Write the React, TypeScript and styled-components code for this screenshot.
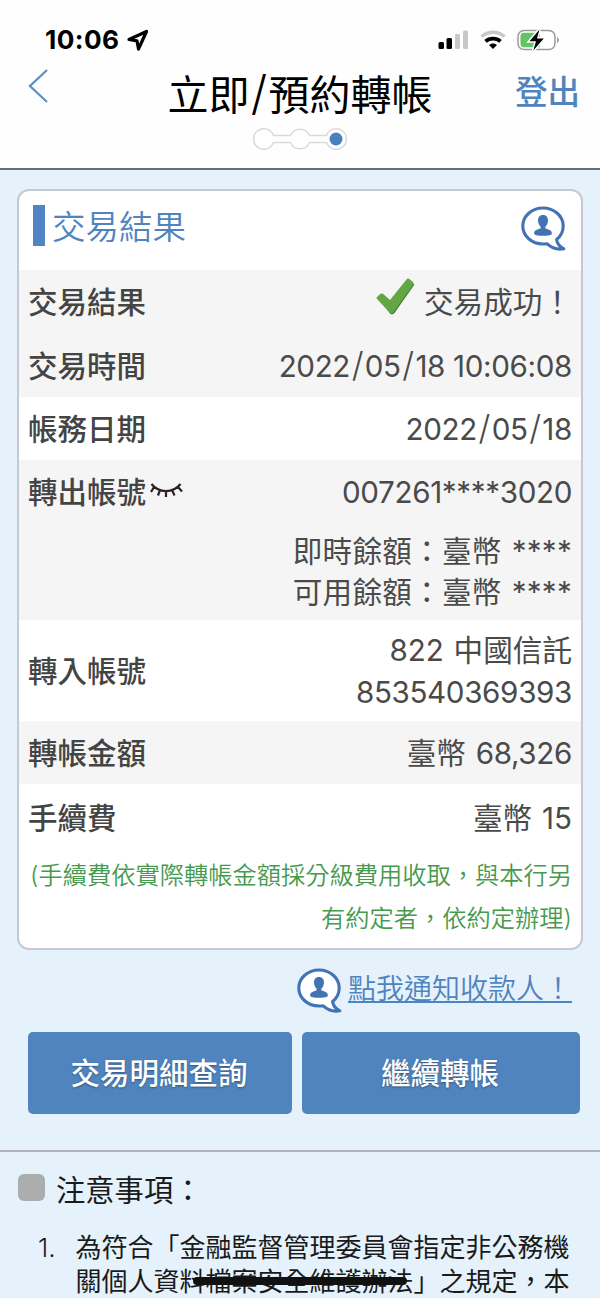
import React from 'react';
import styled, { createGlobalStyle } from 'styled-components';

const GlobalStyle = createGlobalStyle`
  * { box-sizing: border-box; }
  html, body { margin: 0; padding: 0; }
  body {
    height: 1298px;
    overflow: hidden;
    background: #e5f2fc;
    font-family: Inter, 'Noto Sans CJK TC', sans-serif;
    color: #444;
  }
`;

const Screen = styled.div`
  position: relative;
  width: 600px;
  height: 1298px;
  overflow: hidden;
  background: #e5f2fc;
`;

const Header = styled.header`
  height: 170px;
  background: #fefefe;
  border-bottom: 2px solid #666e80;
`;

const StatusBar = styled.div`
  display: flex;
  align-items: center;
  height: 66px;
  padding: 14px 41px 0 45px;
`;

const Clock = styled.span`
  width: 75px;
  font-size: 26.2px;
  line-height: 30px;
  font-weight: 700;
  letter-spacing: 0.4px;
  color: #000;
  white-space: nowrap;
`;

const StatusIcons = styled.div`
  display: flex;
  align-items: center;
  gap: 10px;
  margin-left: auto;
`;

const NavBar = styled.div`
  display: grid;
  grid-template-columns: 120px 1fr 120px;
  height: 56px;
`;

const BackButton = styled.button`
  display: flex;
  align-items: flex-start;
  padding: 2px 0 0 28px;
  border: 0;
  background: none;
`;

const Title = styled.h1`
  margin: 0;
  font-size: 41px;
  line-height: 58px;
  font-weight: 400;
  text-align: center;
  color: #000;
  white-space: nowrap;
`;

const Slash = styled.span<{ $gap: number }>`
  padding: 0 ${p => p.$gap}px;
  font-size: 1.15em;
  font-weight: 300;
  line-height: 0;
`;

const Logout = styled.a`
  padding-right: 20px;
  font-size: 32.5px;
  line-height: 53px;
  font-weight: 500;
  text-align: right;
  color: #5084bf;
`;

const Steps = styled.div`
  display: flex;
  justify-content: center;
  padding-top: 5px;
`;

const Card = styled.section`
  width: 566px;
  height: 761px;
  margin: 19px 0 0 17px;
  overflow: hidden;
  border: 2px solid #c6c9d1;
  border-radius: 12px;
  background: #fff;
`;

const CardHead = styled.div`
  display: flex;
  align-items: center;
  height: 79px;
  padding: 0 15px 4px 14px;
`;

const Accent = styled.span`
  width: 12px;
  height: 41px;
  margin: -6px 7px 0 0;
  background: #5084c4;
`;

const CardTitle = styled.h2`
  flex: 1;
  margin: -4px 0 0;
  font-size: 33.5px;
  line-height: 44px;
  font-weight: 350;
  color: #5084bf;
`;

const Row = styled.div<{ $h: number; $shade?: boolean; $top?: boolean }>`
  display: flex;
  justify-content: space-between;
  align-items: ${p => (p.$top ? 'flex-start' : 'center')};
  height: ${p => p.$h}px;
  padding: ${p => (p.$top ? '11px' : '0')} 9px 0 9px;
  background: ${p => (p.$shade ? '#f5f5f5' : '#fff')};
`;

const Label = styled.span`
  display: flex;
  align-items: center;
  font-size: 29.5px;
  line-height: 42px;
  font-weight: 500;
  color: #444;
  white-space: nowrap;
`;

const Value = styled.div`
  font-size: 29.6px;
  line-height: 42px;
  font-weight: 370;
  text-align: right;
  word-spacing: 1.5px;
  color: #4a4a4a;
  white-space: nowrap;
`;

const Digits = styled.span`
  letter-spacing: -0.35px;
  word-spacing: 0;
`;

const SuccessValue = styled(Value)`
  display: flex;
  align-items: center;
  gap: 8px;

  svg {
    margin-bottom: 11px;
  }
`;

const Balances = styled.div`
  padding-top: 18px;
  line-height: 41px;
  letter-spacing: 0.25px;
`;

const FeeRow = styled(Row)`
  padding-top: 4px;
`;

const FeeNote = styled.p`
  margin: 7px 9px 0 0;
  font-size: 24.25px;
  line-height: 43px;
  font-weight: 350;
  text-align: right;
  color: #459a4e;
  white-space: nowrap;
`;

const Notify = styled.a`
  display: flex;
  justify-content: flex-end;
  align-items: center;
  gap: 6px;
  height: 46px;
  margin: 18px 28px 0 0;
  color: #5084bf;
`;

const NotifyText = styled.span`
  font-size: 28px;
  line-height: 31px;
  height: 29px;
  margin-top: -5px;
  font-weight: 350;
  border-bottom: 2px solid #5084bf;
`;

const Actions = styled.div`
  display: grid;
  grid-template-columns: 264px 278px;
  gap: 10px;
  margin: 18px 0 0 28px;
`;

const ActionButton = styled.button`
  height: 82px;
  padding: 0 2px 0 0;
  border: 0;
  border-radius: 5px;
  background: #5084bf;
  color: #fff;
  font-family: inherit;
  font-size: 29.5px;
  line-height: 80px;
  font-weight: 500;
  text-shadow: 0 1px 2px rgba(0, 0, 0, 0.35);
`;

const Notes = styled.section`
  margin-top: 36px;
  padding: 18px 0 0 18px;
  border-top: 2px solid #b0b2b6;
  color: #1a1a1a;
`;

const NotesHead = styled.div`
  display: flex;
  align-items: center;
  gap: 11px;
  height: 42px;
`;

const Bullet = styled.span`
  width: 27px;
  height: 27px;
  margin-top: -8px;
  border-radius: 6px;
  background: #acadaf;
`;

const NotesTitle = styled.span`
  font-size: 29.3px;
  line-height: 42px;
`;

const NoteItem = styled.div`
  display: flex;
  padding: 19px 0 0 20px;
  font-size: 26px;
  line-height: 33.5px;
  white-space: nowrap;
`;

const NoteNumber = styled.span`
  width: 37.5px;
  font-weight: 350;
`;

const HomeIndicator = styled.div`
  position: absolute;
  left: 193px;
  top: 1277px;
  width: 214px;
  height: 8px;
  border-radius: 4px;
  background: #111;
`;

const ContactIcon = () => (
  <svg width="46" height="46" viewBox="0 0 46 46">
    <path
      d="M23 2C11.800 2 2.800 10 2.800 20S11.800 38 23 38C24.300 38 25.600 37.900 26.900 37.700C31 41.500 37 44 43.800 42.800C39.500 40.500 37 37 36.600 33.500C40.700 30.200 43.200 25.500 43.200 20C43.200 10 34.200 2 23 2Z"
      fill="#fff"
      stroke="#4273b5"
      strokeWidth="3.100"
      strokeLinejoin="round"
    />
    <path
      d="M23 9c-3.200 0-5 2.200-5 5.300 0 2.700 1.100 5.100 2.600 6.300v1.900c-3.700.8-6.500 2.200-6.500 4.900 0 1.700 3.900 2.300 8.900 2.300s8.900-.6 8.900-2.300c0-2.700-2.800-4.100-6.500-4.900v-1.900c1.500-1.200 2.600-3.600 2.600-6.300 0-3.100-1.800-5.300-5-5.300Z"
      fill="#4273b5"
    />
  </svg>
);

const DateText = ({ value }: { value: string }) => (
  <Digits>
    {value.split('/').map((part, i) => (
      <React.Fragment key={i}>
        {i > 0 && <Slash $gap={1.6}>/</Slash>}
        {part}
      </React.Fragment>
    ))}
  </Digits>
);

export default function App() {
  return (
    <Screen lang="zh-Hant">
      <GlobalStyle />
      <Header>
        <StatusBar>
          <Clock>10:06</Clock>
          <svg width="30" height="24" viewBox="0 0 30 24">
            <path d="M9 11.500L26.500 3.500L18.500 21L17 12.800Z" fill="none" stroke="#000" strokeWidth="3.200" strokeLinejoin="round" />
          </svg>
          <StatusIcons>
            <svg width="32" height="20" viewBox="0 0 32 20">
              <rect x="0.500" y="12" width="5.500" height="7" rx="1.500" fill="#000" />
              <rect x="8.500" y="8" width="5.500" height="11" rx="1.500" fill="#000" />
              <rect x="17" y="4" width="5" height="15" rx="1.500" fill="#c8c8c8" />
              <rect x="25" y="0.500" width="5" height="18.500" rx="1.500" fill="#c8c8c8" />
            </svg>
            <svg width="26" height="20" viewBox="0 0 26 20">
              <path d="M1.500 6.500C8 0.800 18 0.800 24.500 6.500" fill="none" stroke="#c8c8c8" strokeWidth="3.600" />
              <path d="M5.500 11.400C9.800 7.600 16.200 7.600 20.500 11.400" fill="none" stroke="#000" strokeWidth="3.800" />
              <path d="M9 15C11.300 12.900 14.700 12.900 17 15L13 19Z" fill="#000" />
            </svg>
            <svg width="43" height="24" viewBox="0 0 43 24">
              <rect x="2" y="2.500" width="37" height="19" rx="6" fill="#fff" stroke="#9a9a9a" strokeWidth="1.500" />
              <path d="M8 4.800H24V19.200H8A3.500 3.500 0 0 1 4.500 15.700V8.300A3.500 3.500 0 0 1 8 4.800Z" fill="#62c466" />
              <path d="M41 9v6c2.400-1 2.400-5 0-6Z" fill="#9a9a9a" />
              <path d="M23.500 1.500L13.500 13.300H20L17.300 22.500L27.800 10.500H21Z" fill="#000" stroke="#fff" strokeWidth="3" paintOrder="stroke" />
            </svg>
          </StatusIcons>
        </StatusBar>
        <NavBar>
          <BackButton aria-label="返回">
            <svg width="21" height="36" viewBox="0 0 21 36">
              <path d="M19 2L2 18L19 34" fill="none" stroke="#5c90c6" strokeWidth="2.300" />
            </svg>
          </BackButton>
          <Title>
            立即<Slash $gap={1.3}>/</Slash>預約轉帳
          </Title>
          <Logout>登出</Logout>
        </NavBar>
        <Steps>
          <svg width="94" height="24" viewBox="0 0 94 24">
            <path
              d="M20.500 8.500H37.500A10.300 10.300 0 0 1 56.500 8.500H73.500A10.300 10.300 0 1 1 73.500 15.500H56.500A10.300 10.300 0 0 1 37.500 15.500H20.500A10.300 10.300 0 1 1 20.500 8.500Z"
              fill="#fff"
              stroke="#d9d9dc"
              strokeWidth="1.500"
            />
            <circle cx="83" cy="12" r="6.500" fill="#4a80c0" />
          </svg>
        </Steps>
      </Header>

      <Card>
        <CardHead>
          <Accent />
          <CardTitle>交易結果</CardTitle>
          <ContactIcon />
        </CardHead>
        <Row $h={64} $shade>
          <Label>交易結果</Label>
          <SuccessValue>
            <svg width="40" height="38" viewBox="0 0 40 38">
              <path d="M2.500 21.500L7.500 17.500L15.500 24L31.500 2.500L38.500 6.500L18.500 35Q17 37 14.500 36Z" fill="#4c7f38" />
              <path d="M0.800 20.800Q0 19.800 1 19L4.500 15.800Q6 15 7.200 16L14 22L30.500 1.500Q31.700 0 33 0.800L37 4Q38 5 37.300 6.200L17.500 34Q16 36 14 34.500Z" fill="#62a744" />
            </svg>
            交易成功！
          </SuccessValue>
        </Row>
        <Row $h={63} $shade>
          <Label>交易時間</Label>
          <Value><DateText value="2022/05/18 10:06:08" /></Value>
        </Row>
        <Row $h={63}>
          <Label>帳務日期</Label>
          <Value><DateText value="2022/05/18" /></Value>
        </Row>
        <Row $h={160} $shade $top>
          <Label>
            轉出帳號
            <svg width="38" height="24" viewBox="-1 0 38 24">
              <path d="M4.500 4C12 13.500 26 13.500 33.500 4M7 7L4 12M13 10L11 15.500M19 11.500V17M25 10L27.500 15.500M31 7L35 11.500" fill="none" stroke="#2d2220" strokeWidth="2.200" />
            </svg>
          </Label>
          <Value>
            <Digits>007261****3020</Digits>
            <Balances>
              即時餘額：臺幣 ****
              <br />
              可用餘額：臺幣 ****
            </Balances>
          </Value>
        </Row>
        <Row $h={101}>
          <Label>轉入帳號</Label>
          <Value>
            822 中國信託
            <br />
            <Digits>853540369393</Digits>
          </Value>
        </Row>
        <Row $h={63} $shade>
          <Label>轉帳金額</Label>
          <Value>臺幣 <Digits>68,326</Digits></Value>
        </Row>
        <FeeRow $h={63}>
          <Label>手續費</Label>
          <Value>臺幣 15</Value>
        </FeeRow>
        <FeeNote>
          (手續費依實際轉帳金額採分級費用收取，與本行另
          <br />
          有約定者，依約定辦理)
        </FeeNote>
      </Card>

      <Notify>
        <ContactIcon />
        <NotifyText>點我通知收款人！</NotifyText>
      </Notify>

      <Actions>
        <ActionButton>交易明細查詢</ActionButton>
        <ActionButton>繼續轉帳</ActionButton>
      </Actions>

      <Notes>
        <NotesHead>
          <Bullet />
          <NotesTitle>注意事項：</NotesTitle>
        </NotesHead>
        <NoteItem>
          <NoteNumber>1.</NoteNumber>
          <div>
            為符合「金融監督管理委員會指定非公務機
            <br />
            關個人資料檔案安全維護辦法」之規定，本
          </div>
        </NoteItem>
      </Notes>
      <HomeIndicator />
    </Screen>
  );
}
